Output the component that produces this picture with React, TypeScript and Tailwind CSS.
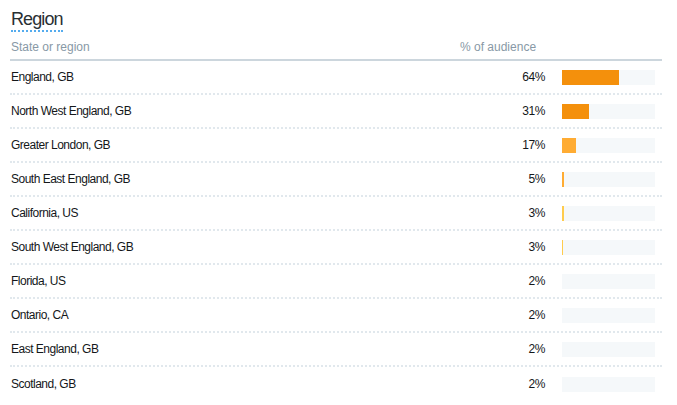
const rows = [
  { name: "England, GB", pct: "64%", bar: 57, color: "bg-[#f4900c]" },
  { name: "North West England, GB", pct: "31%", bar: 27, color: "bg-[#f4900c]" },
  { name: "Greater London, GB", pct: "17%", bar: 14, color: "bg-[#ffac33]" },
  { name: "South East England, GB", pct: "5%", bar: 2, color: "bg-[#ffac33]" },
  { name: "California, US", pct: "3%", bar: 2, color: "bg-[#ffcc4d]" },
  { name: "South West England, GB", pct: "3%", bar: 1, color: "bg-[#ffcc4d]" },
  { name: "Florida, US", pct: "2%", bar: 0, color: "bg-[#ffcc4d]" },
  { name: "Ontario, CA", pct: "2%", bar: 0, color: "bg-[#ffcc4d]" },
  { name: "East England, GB", pct: "2%", bar: 0, color: "bg-[#ffcc4d]" },
  { name: "Scotland, GB", pct: "2%", bar: 0, color: "bg-[#ffcc4d]" },
]

export default function App() {
  return (
    <div className="w-[677px] h-[405px] bg-white font-['Liberation_Sans',Arial,sans-serif] text-[#14171a]">
      <div className="ml-[10px] w-[652px]">
        <div className="pt-[8px] pl-[1px] h-[35px]">
          <span className="text-[18px] leading-[21px] tracking-[-0.9px] text-[#292f33] border-b-2 border-dotted border-[#55acee] pb-[1px]">
            Region
          </span>
        </div>
        <div className="flex items-center h-[26px] border-b-2 border-[#ccd6dd] text-[12px] text-[#8899a6]">
          <div className="flex-1 pl-[1px]">State or region</div>
          <div className="w-[202px]">% of audience</div>
        </div>
        {rows.map((r, i) => (
          <div
            key={r.name}
            className={
              i < rows.length - 1
                ? "flex items-center h-[34px] border-b-2 border-dotted border-[#e1e8ed] text-[12px]"
                : "flex items-center h-[34px] text-[12px]"
            }
          >
            <div className="flex-1 pl-[1px] tracking-[-0.5px]">{r.name}</div>
            <div className="w-[85px] text-right tracking-[-0.4px]">{r.pct}</div>
            <div className="ml-[17px] w-[93px] h-[15px] bg-[#f5f8fa] flex">
              <div className={`h-full ${r.color}`} style={{ width: r.bar }} />
            </div>
            <div className="w-[7px]" />
          </div>
        ))}
      </div>
    </div>
  )
}
